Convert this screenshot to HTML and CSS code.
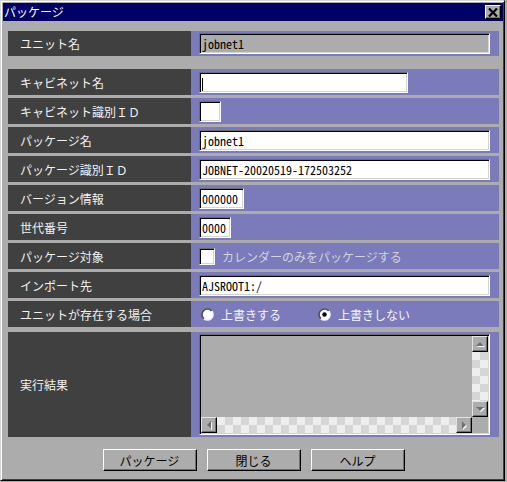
FILE: index.html
```html
<!DOCTYPE html>
<html lang="ja">
<head>
<meta charset="utf-8">
<title>パッケージ</title>
<link rel="stylesheet" href="styles.css">
</head>
<body>
<div class="window">
  <div class="titlebar">
    <span class="title">パッケージ</span>
    <span class="close"><svg width="10" height="9" viewBox="0 0 10 9"><path d="M1 0.5 L9 8.5 M9 0.5 L1 8.5" stroke="#000" stroke-width="2.2"/></svg></span>
  </div>
  <div class="content">
    <div class="row row-first">
      <div class="label">ユニット名</div>
      <div class="value"><div class="field disabled w-full">jobnet1</div></div>
    </div>
    <div class="rows">
      <div class="row">
        <div class="label">キャビネット名</div>
        <div class="value"><div class="field w-cab"><span class="caret"></span></div></div>
      </div>
      <div class="row">
        <div class="label">キャビネット識別ＩＤ</div>
        <div class="value"><div class="field w-id"></div></div>
      </div>
      <div class="row">
        <div class="label">パッケージ名</div>
        <div class="value"><div class="field w-full">jobnet1</div></div>
      </div>
      <div class="row">
        <div class="label">パッケージ識別ＩＤ</div>
        <div class="value"><div class="field w-full">JOBNET-20020519-172503252</div></div>
      </div>
      <div class="row">
        <div class="label">バージョン情報</div>
        <div class="value"><div class="field w-ver">000000</div></div>
      </div>
      <div class="row">
        <div class="label">世代番号</div>
        <div class="value"><div class="field w-gen">0000</div></div>
      </div>
      <div class="row">
        <div class="label">パッケージ対象</div>
        <div class="value"><span class="check"></span><span class="check-text">カレンダーのみをパッケージする</span></div>
      </div>
      <div class="row">
        <div class="label">インポート先</div>
        <div class="value"><div class="field w-full">AJSROOT1:/</div></div>
      </div>
      <div class="row">
        <div class="label">ユニットが存在する場合</div>
        <div class="value radios">
          <span class="radio radio-first"><svg width="13" height="13" viewBox="0 0 13 13"><defs><linearGradient id="rg" x1="0" y1="0" x2="1" y2="1"><stop offset="0" stop-color="#505050"/><stop offset="0.5" stop-color="#505050"/><stop offset="0.5" stop-color="#f4f4f4"/><stop offset="1" stop-color="#f4f4f4"/></linearGradient></defs><circle cx="6.5" cy="6.5" r="5.5" fill="#fff" stroke="url(#rg)" stroke-width="1.6"/></svg><span>上書きする</span></span>
          <span class="radio"><svg width="13" height="13" viewBox="0 0 13 13"><circle cx="6.5" cy="6.5" r="5.5" fill="#fff" stroke="url(#rg)" stroke-width="1.6"/><circle cx="6.5" cy="6.5" r="2.2" fill="#000"/></svg><span>上書きしない</span></span>
        </div>
      </div>
    </div>
    <div class="row row-result">
      <div class="label">実行結果</div>
      <div class="value">
        <div class="memo">
          <div class="memo-text"></div>
          <div class="vscroll">
            <span class="sbtn"><svg width="14" height="14" viewBox="0 0 14 14"><path d="M3 9 L7 5 L11 9 Z" fill="#fff" transform="translate(1,1)"/><path d="M3 9 L7 5 L11 9 Z" fill="#6e6e6e"/></svg></span>
            <span class="track"></span>
            <span class="sbtn"><svg width="14" height="14" viewBox="0 0 14 14"><path d="M3 5 L7 9 L11 5 Z" fill="#fff" transform="translate(1,1)"/><path d="M3 5 L7 9 L11 5 Z" fill="#6e6e6e"/></svg></span>
          </div>
          <div class="hscroll">
            <span class="sbtn"><svg width="14" height="14" viewBox="0 0 14 14"><path d="M9 3 L5 7 L9 11 Z" fill="#fff" transform="translate(1,1)"/><path d="M9 3 L5 7 L9 11 Z" fill="#6e6e6e"/></svg></span>
            <span class="track"></span>
            <span class="sbtn"><svg width="14" height="14" viewBox="0 0 14 14"><path d="M5 3 L9 7 L5 11 Z" fill="#fff" transform="translate(1,1)"/><path d="M5 3 L9 7 L5 11 Z" fill="#6e6e6e"/></svg></span>
          </div>
          <div class="corner"></div>
        </div>
      </div>
    </div>
    <div class="buttons">
      <button class="btn">パッケージ</button>
      <button class="btn">閉じる</button>
      <button class="btn">ヘルプ</button>
    </div>
  </div>
</div>
</body>
</html>
```

FILE: styles.css
```css
* { box-sizing: border-box; }

body {
  margin: 0;
  background: #acacac;
  font-family: "Noto Sans CJK JP", "Liberation Sans", sans-serif;
  font-size: 12px;
}

.window {
  width: 505px;
  height: 481px;
  background: #acacac;
  border: 1px solid;
  border-color: #d6d6d6 #000 #000 #d6d6d6;
  box-shadow: inset 1px 1px #fff, inset -1px -1px #404040;
  padding: 2px 1px 2px 2px;
  display: flex;
  flex-direction: column;
}

.titlebar {
  height: 18px;
  background: #000066;
  color: #fff;
  display: flex;
  align-items: center;
  justify-content: space-between;
  padding-left: 1px;
  padding-right: 2px;
}

.title {
  line-height: 14px;
  font-size: 12px;
}

.close {
  width: 16px;
  height: 14px;
  background: #acacac;
  border: 1px solid;
  border-color: #fff #000 #000 #fff;
  box-shadow: inset -1px -1px #707070;
  display: flex;
  align-items: center;
  justify-content: center;
}

.content {
  padding: 10px 4px 0 5px;
  display: flex;
  flex-direction: column;
}

.row {
  display: flex;
  height: 26px;
}

.row-first {
  height: 25px;
  margin-bottom: 13px;
}

.rows {
  display: flex;
  flex-direction: column;
  gap: 3px;
}

.row-result {
  height: 105px;
  margin-top: 5px;
}

.label {
  width: 183px;
  background: #404040;
  color: #f2f2f2;
  padding-left: 12px;
  display: flex;
  align-items: center;
  white-space: nowrap;
}

.value {
  flex: 1;
  background: #7b7bbb;
  display: flex;
  align-items: center;
  padding-left: 8px;
}

.field {
  height: 21px;
  background: #fff;
  border: 1px solid;
  border-color: #6e6e6e #fff #fff #6e6e6e;
  box-shadow: inset 1px 1px #000, inset -1px -1px #d4d4d4;
  font-family: "Noto Sans Mono CJK JP", "Liberation Mono", monospace;
  font-size: 12px;
  line-height: 19px;
  padding: 0 2px;
  color: #000;
  white-space: nowrap;
  overflow: hidden;
}

.field.disabled { background: #acacac; }

.w-full { width: 291px; }
.w-cab { width: 209px; }
.w-id { width: 22px; }
.w-ver { width: 45px; }
.w-gen { width: 32px; }

.caret {
  display: inline-block;
  width: 1px;
  height: 13px;
  background: #000;
  vertical-align: middle;
}

.check {
  width: 16px;
  height: 17px;
  background: #fff;
  border: 1px solid;
  border-color: #6e6e6e #fff #fff #6e6e6e;
  box-shadow: inset 1px 1px #000, inset -1px -1px #d4d4d4;
}

.check-text {
  margin-left: 7px;
  color: #d4d4d4;
}

.radios {
  padding-left: 10px;
}

.radio {
  display: flex;
  align-items: center;
  gap: 7px;
  color: #f6f6f6;
}

.radio svg { display: block; }

.radio-first {
  width: 117px;
}

.memo {
  width: 291px;
  height: 101px;
  background: #acacac;
  border: 1px solid;
  border-color: #6e6e6e #fff #fff #6e6e6e;
  box-shadow: inset 1px 1px #000, inset -1px -1px #d4d4d4;
  padding: 1px;
  display: grid;
  grid-template-columns: 1fr 16px;
  grid-template-rows: 1fr 16px;
}

.vscroll {
  display: flex;
  flex-direction: column;
}

.hscroll {
  display: flex;
}

.track {
  flex: 1;
  background: repeating-conic-gradient(#d6d6d6 0 25%, #eeeeee 0 50%) 0 0 / 16px 16px;
}

.sbtn {
  width: 16px;
  height: 16px;
  flex: none;
  background: #acacac;
  border: 1px solid;
  border-color: #e4e4e4 #000 #000 #e4e4e4;
  box-shadow: inset -1px -1px #707070;
  display: flex;
  align-items: center;
  justify-content: center;
}

.corner { background: #acacac; }

.buttons {
  display: flex;
  justify-content: center;
  gap: 10px;
  margin-top: 12px;
}

.btn {
  width: 94px;
  height: 22px;
  background: #acacac;
  border: 1px solid;
  border-color: #fff #000 #000 #fff;
  box-shadow: inset -1px -1px #707070;
  font-family: "Noto Sans CJK JP", sans-serif;
  font-size: 12px;
  color: #000;
  padding: 0;
}
```
